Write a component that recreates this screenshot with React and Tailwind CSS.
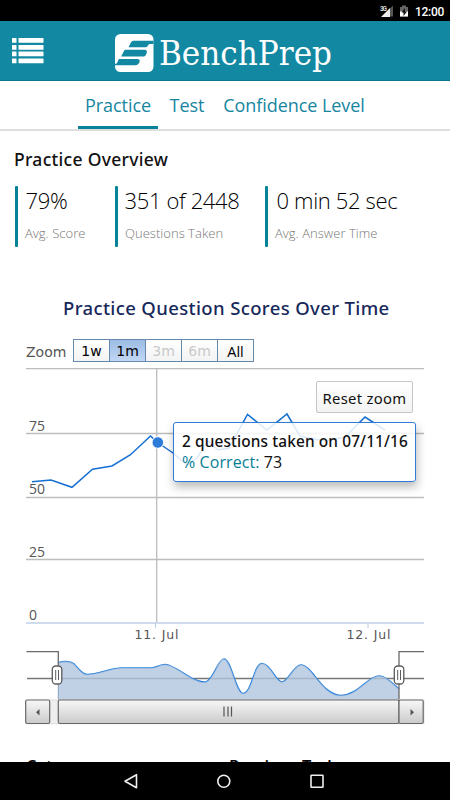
import React from "react";
import clsx from "clsx";

const tabs = [
  { label: "Practice", active: true, className: "w-20" },
  { label: "Test", className: "w-[34px]" },
  { label: "Confidence Level", className: "w-[142px]" },
];

const stats = [
  { value: "79%", label: "Avg. Score", className: "w-[100px]", valueClass: "pl-[7.5px]" },
  { value: "351 of 2448", label: "Questions Taken", className: "w-[150px]", valueClass: "pl-[6.5px]" },
  { value: "0 min 52 sec", label: "Avg. Answer Time", className: "w-[160px]", valueClass: "pl-[8.5px]" },
];

const ranges = [
  { label: "1w" },
  { label: "1m", active: true },
  { label: "3m", disabled: true },
  { label: "6m", disabled: true },
  { label: "All", className: "font-['Open_Sans',sans-serif] text-[14.5px]" },
];

const StatusBar = () => (
  <div className="flex h-[21px] shrink-0 items-center justify-end bg-black pr-[6px] text-white">
    <svg width="36" height="21" viewBox="0 0 36 21">
      <text x="1" y="10.500" fontSize="6.5" fontWeight="700" fill="#d8d8d8" fontFamily="Roboto, sans-serif" textLength="7">3G</text>
      <path d="M14 5.500v11h-4V9.500z" fill="#555" />
      <path d="M2 17 11 8v9z" fill="#eee" />
      <path d="M21 7h2V5.500h4V7h2v9.500h-8z" fill="#666" />
      <path d="M21 11.500h8v5h-8z" fill="#fff" />
      <path d="m26 8-3.500 4.500h2V16l3.500-4.500h-2z" fill="#111" />
    </svg>
    <span className="pt-[3px] font-['Roboto',sans-serif] text-[12px] leading-[20px] font-medium tracking-[-0.3px]">
      12:00
    </span>
  </div>
);

const Header = () => (
  <header className="flex h-[60px] shrink-0 items-center border-b border-[#0b7890] bg-[#1388a2] pl-3">
    <svg width="32" height="26" viewBox="0 0 32 26" fill="#fff">
      {[0, 7, 13.500, 20.500].map((y) => (
        <g key={y}>
          <rect x="0" y={y} width="4.500" height="4.800" rx=".6" />
          <rect x="6.500" y={y} width="25" height="4.800" rx=".6" />
        </g>
      ))}
    </svg>
    <div className="ml-[71px] flex items-center pt-1">
      <svg width="39" height="38" viewBox="0 0 39 38">
        <rect x="0" y="0" width="38.500" height="38" rx="5.500" fill="#fff" />
        <g fill="#1388a2">
          <path d="M38.500 6.800H19c-1.500 0-2.500.6-3.100 1.800l-2.400 4.700h16.300c1.700 0 2.500-.7 3.200-1.900.5-.9 1.300-1.400 2.600-1.400h2.900z" />
          <path d="M10.500 15.800h19c1.800 0 2.800 1 2.300 2.700l-.5 1.500c-.6 1.800-1.700 2.600-3.500 2.600H6.200l2.600-5.300c.4-.9.900-1.500 1.700-1.500z" />
          <path d="M4.800 25h17.400c2 0 2.900 1 2.400 2.600-.7 2.500-2 3.700-4.300 3.700H0v-1.300c1.300 0 1.900-.6 2.400-1.700l.8-2c.4-.9.900-1.300 1.600-1.300z" />
        </g>
      </svg>
      <svg width="180" height="50" viewBox="0 0 180 50" className="ml-[4px] overflow-visible">
        <text x="1" y="36.500" fontSize="33" textLength="173" lengthAdjust="spacingAndGlyphs" fill="#fff" fontFamily="'DejaVu Serif', serif" fontWeight="400">BenchPrep</text>
      </svg>
    </div>
  </header>
);

const Tabs = () => (
  <nav className="flex h-[50px] shrink-0 gap-3 border-b-2 border-[#dedede] pl-[78px] text-[18px] tracking-[-0.05px] text-[#16869f]">
    {tabs.map((tab) => (
      <a
        key={tab.label}
        className={clsx(
          "flex items-center justify-center pt-[3px] whitespace-nowrap",
          tab.className,
          tab.active ? "border-b-[3px] border-[#08829b]" : "mr-[7px] pb-[3px]"
        )}
      >
        {tab.label}
      </a>
    ))}
  </nav>
);

const Overview = () => (
  <section className="pl-[15px]">
    <h2 className="-ml-px pt-4 font-['Noto_Sans',sans-serif] text-[17.5px] leading-6 font-medium tracking-[0.3px] text-[#111]">
      Practice Overview
    </h2>
    <div className="mt-[15px] flex">
      {stats.map((stat) => (
        <div key={stat.label} className={clsx("flex font-light", stat.className)}>
          <div className="h-[61px] w-[3px] shrink-0 rounded-[1px] bg-[#078399]" />
          <div className="whitespace-nowrap">
            <p className={clsx("text-[22px] leading-[29px] tracking-[-0.35px] text-black", stat.valueClass)}>
              {stat.value}
            </p>
            <p className="mt-2 pl-[7px] text-[13px] leading-5 tracking-[0.03px] text-[#777]">{stat.label}</p>
          </div>
        </div>
      ))}
    </div>
  </section>
);

const RangeSelector = () => (
  <div className="flex h-[23px] items-center pl-[26px]">
    <span className="w-[47px] pt-1 font-['DejaVu_Sans',sans-serif] text-[14px] text-[#555]">Zoom</span>
    <div className="flex h-[23px] border border-[#668aae] font-['DejaVu_Sans',sans-serif] text-[14px]">
      {ranges.map((range) => (
        <button
          key={range.label}
          className={clsx(
            "flex w-9 items-center justify-center border-r border-[#668aae] pt-0.5 last:w-[35px] last:border-r-0",
            range.active ? "bg-linear-to-b from-[#9bbce4] to-[#c1d7f4]" : "bg-linear-to-b from-white to-[#f3f3f3]",
            range.disabled ? "text-[#c9c9c9]" : "text-black",
            range.className
          )}
        >
          {range.label}
        </button>
      ))}
    </div>
  </div>
);

const ScoreChart = () => (
  <div className="relative h-[279px]">
    <svg width="450" height="279" viewBox="0 365 450 279" className="block">
      <g stroke="#bdbdbd" strokeWidth="1.300">
        <path d="M26 368.700H424M26 433.500H424M26 497.500H424M26 559.500H424M156.700 369V623" />
      </g>
      <path d="M26 623H424" stroke="#cfdceb" strokeWidth="1.800" />
      <path d="M155.500 623v5M368 623v5" stroke="#b9cbe0" />
      <g fontFamily="'Open Sans', sans-serif" fontSize="14" fill="#555">
        <text x="29" y="430.500">75</text>
        <text x="29" y="494">50</text>
        <text x="29" y="557">25</text>
        <text x="29" y="620">0</text>
      </g>
      <g fontFamily="'DejaVu Sans', sans-serif" fontSize="12.500" fill="#555">
        <text x="134.500" y="639" textLength="44">11. Jul</text>
        <text x="346.500" y="639" textLength="44">12. Jul</text>
      </g>
      <path
        d="M32 481.700 51 480 72 487.300 92.500 469.200 112 466 130.500 454.700 150.500 436 157 442 173 453 187 465 197 458 208 441 218 450 229 448 247.500 414.500 267 430 287 414 300 436 325 441 345 437 365 417 385 430"
        fill="none"
        stroke="#1670d2"
        strokeWidth="1.500"
      />
      <circle cx="157.800" cy="442.500" r="5.800" fill="#2e7cda" stroke="#fff" />
    </svg>
    <button className="absolute top-4 left-[316px] h-8 w-[97px] rounded-xs border border-[#c5c5c5] bg-linear-to-b from-white to-[#f3f3f3] pt-0.5 font-['Noto_Sans',sans-serif] text-[14.8px] tracking-[0.3px] whitespace-nowrap text-[#111]">
      Reset zoom
    </button>
    <div className="absolute top-[57px] left-[173px] h-[60px] w-[243px] rounded-[3px] border border-[#2f7bd7] bg-white/85 pt-[9px] pl-2 whitespace-nowrap shadow-[1px_5px_10px_rgba(0,0,0,0.28)]">
      <p className="font-['Noto_Sans',sans-serif] text-[15.4px] leading-5 font-medium tracking-[0.12px] text-[#111]">
        2 questions taken on 07/11/16
      </p>
      <p className="text-[16px] leading-5 tracking-[0.08px] text-[#111]">
        <span className="text-[#087d96]">% Correct:</span> 73
      </p>
    </div>
  </div>
);

const Navigator = () => (
  <svg width="450" height="84" viewBox="0 644 450 84" className="block">
    <defs>
      <linearGradient id="bar" x2="0" y2="1">
        <stop stopColor="#f8f8f8" />
        <stop offset="1" stopColor="#cacaca" />
      </linearGradient>
    </defs>
    <path d="M27 678.500H424" stroke="#777" strokeWidth="1.300" />
    <path
      d="M58 663C63 661 70 661 74 664C79 669 82 674.500 87 674.500C98 674.500 111 668 122 668H151C156 668 160 664.500 165 664.500C172 664.500 184 674 192 678.500C197 680.500 202 683 206 682C214 679 218 659 224 659C231 659 236 693.500 243 693.500C252 693.500 254 663.500 262 663.500C270 663.500 276 682 282 682C288 682 294 665 301 665C312 665 322 695.500 341 695.500C358 695.500 368 676 379 676C386 676 393 684 399 689"
      fill="none"
      stroke="#2b82da"
      strokeWidth="1.700"
    />
    <path
      d="M58 663C63 661 70 661 74 664C79 669 82 674.500 87 674.500C98 674.500 111 668 122 668H151C156 668 160 664.500 165 664.500C172 664.500 184 674 192 678.500C197 680.500 202 683 206 682C214 679 218 659 224 659C231 659 236 693.500 243 693.500C252 693.500 254 663.500 262 663.500C270 663.500 276 682 282 682C288 682 294 665 301 665C312 665 322 695.500 341 695.500C358 695.500 368 676 379 676C386 676 393 684 399 689V700H58Z"
      fill="#b2c6df"
      fillOpacity=".8"
    />
    <path d="M26.500 651.700H58.300V665M424 651.700H399V700" fill="none" stroke="#6a6a6a" strokeWidth="1.300" />
    <path d="M58.300 665V700" stroke="#8ca2bd" />
    <path d="M26 700h398v23.700H26z" fill="#eee" stroke="#ddd" />
    <g fill="url(#bar)" stroke="#686868" strokeWidth="1.200">
      <rect x="25.700" y="700" width="24" height="23.500" rx="1.500" />
      <rect x="58.300" y="700" width="340.700" height="23.500" rx="1.500" />
      <rect x="399" y="700" width="24.200" height="23.500" rx="1.500" />
    </g>
    <path d="m39.500 709v6.500L36 712.200zM410.500 709v6.500l3.500-3.300z" fill="#555" />
    <path d="M224 706.500v10M228 706.500v10M231.500 706.500v10" stroke="#555" strokeWidth="1.200" />
    {[57, 399].map((x) => (
      <g key={x} stroke="#5c5c5c">
        <rect x={x - 4.700} y="666" width="9.500" height="18" rx="3.500" fill="#fff" strokeWidth="1.300" />
        <path d={`M${x - 1.300} 670v10M${x + 1.500} 670v10`} />
      </g>
    ))}
  </svg>
);

const NavBar = () => (
  <div className="h-[38px] shrink-0 bg-black">
    <svg width="450" height="38" viewBox="0 762 450 38" fill="none" stroke="#eee" strokeWidth="1.600">
      <path d="M136.500 774.700v13L125 781.200z" strokeLinejoin="round" />
      <circle cx="223.800" cy="781.200" r="6" />
      <rect x="311" y="775.200" width="12" height="12" rx=".5" />
    </svg>
  </div>
);

const App = () => (
  <div className="flex h-[800px] w-[450px] flex-col overflow-hidden bg-white font-['Open_Sans',sans-serif]">
    <StatusBar />
    <Header />
    <Tabs />
    <main className="min-h-0 flex-1 overflow-hidden">
      <Overview />
      <h2 className="mt-12 h-[26px] pl-[63px] font-['Noto_Sans',sans-serif] text-[18.5px] leading-[26px] font-medium tracking-[0.37px] whitespace-nowrap text-[#17285a]">
        Practice Question Scores Over Time
      </h2>
      <div className="h-[18px]" />
      <RangeSelector />
      <div className="pt-[3px]">
        <ScoreChart />
        <Navigator />
      </div>
      <div className="flex pt-[26px] text-[16.5px] leading-6 font-semibold text-black">
        <span className="w-[229px] pl-[26px]">Category</span>
        <span>Previous Today</span>
      </div>
    </main>
    <NavBar />
  </div>
);

export default App;
